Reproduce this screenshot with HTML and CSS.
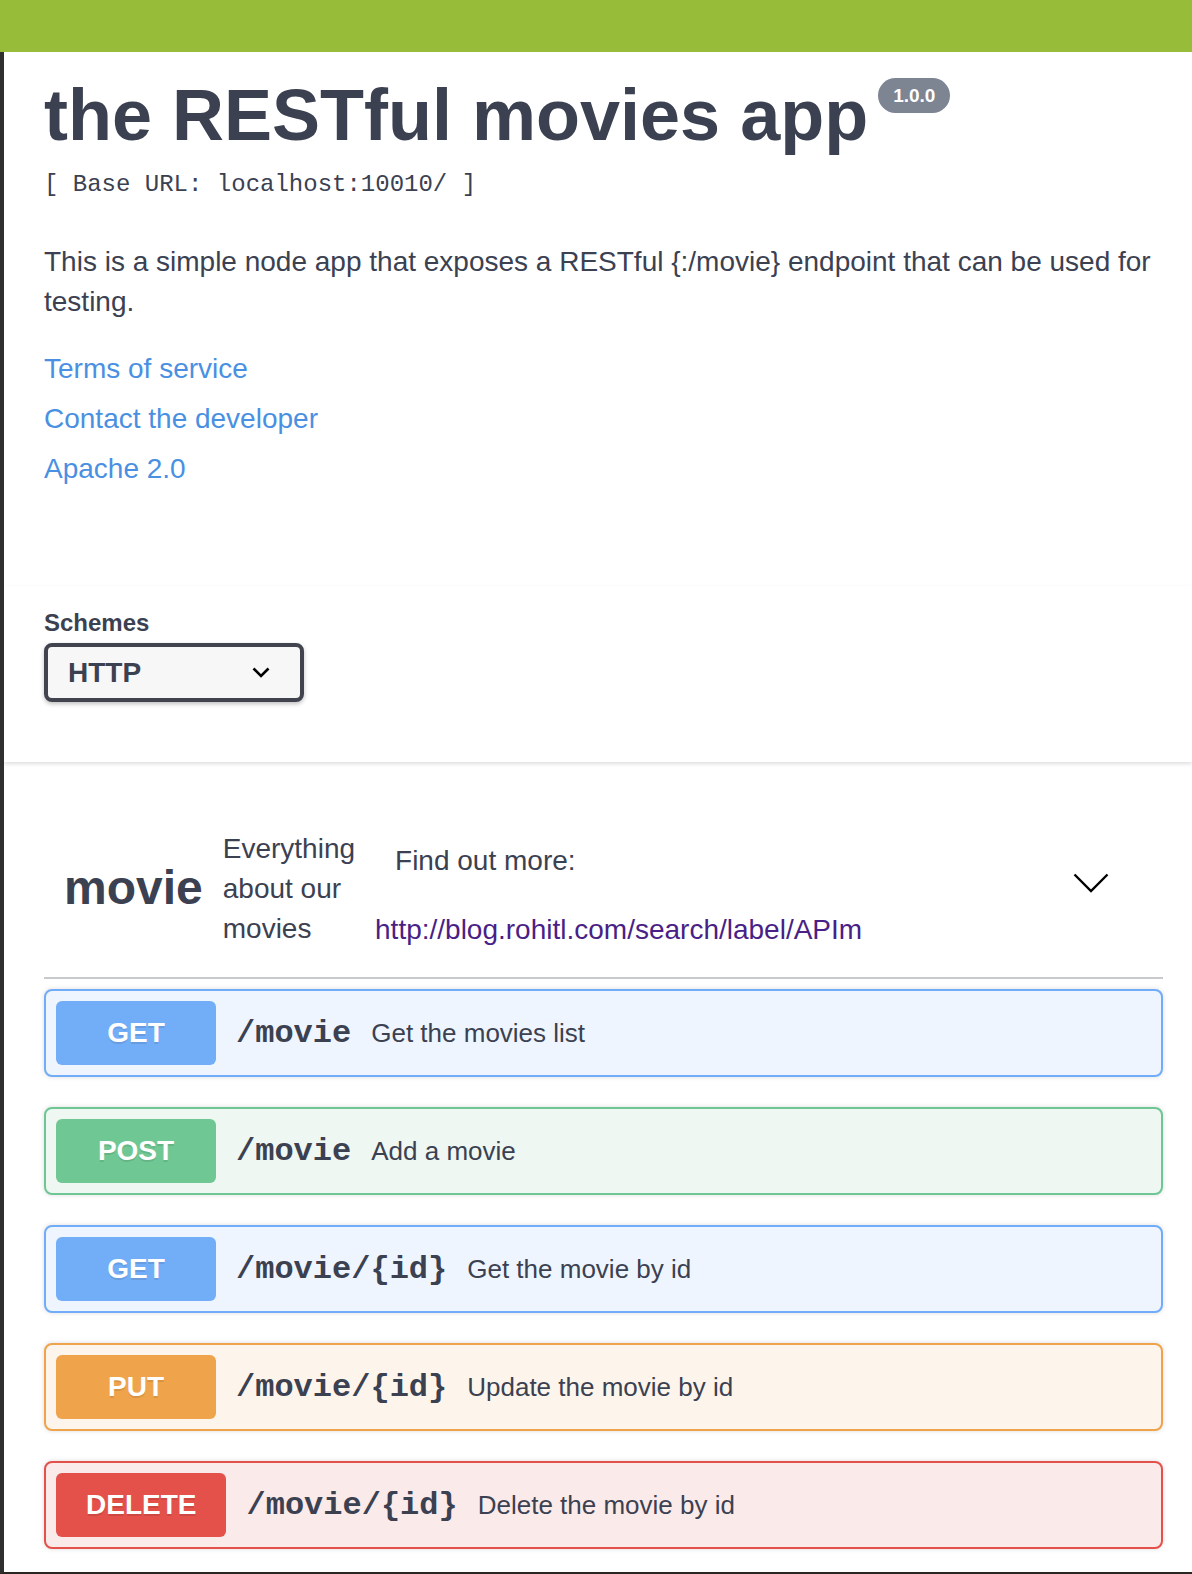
FILE: index.html
```html
<!DOCTYPE html>
<html lang="en">
<head>
<meta charset="utf-8">
<title>the RESTful movies app</title>
<link rel="stylesheet" href="styles.css">
</head>
<body>
<div class="topbar"></div>
<div class="page">
  <div class="wrapper">
    <section class="info">
      <h2 class="title">the RESTful movies app<span class="version">1.0.0</span></h2>
      <pre class="base-url">[ Base URL: localhost:10010/ ]</pre>
      <p class="desc">This is a simple node app that exposes a RESTful {:/movie} endpoint that can be used for testing.</p>
      <div class="links">
        <a class="link" href="#">Terms of service</a>
        <a class="link" href="#">Contact the developer</a>
        <a class="link" href="#">Apache 2.0</a>
      </div>
    </section>
  </div>

  <section class="schemes">
    <div class="wrapper">
      <label class="schemes-label">Schemes</label>
      <div class="select">
        <span>HTTP</span>
        <svg class="select-arrow" width="18" height="11" viewBox="0 0 18 11"><polyline points="1.5,1.5 9,9 16.5,1.5" fill="none" stroke="#000" stroke-width="2.6"/></svg>
      </div>
    </div>
  </section>

  <div class="wrapper">
    <h4 class="tag">
      <span class="tag-name">movie</span>
      <small class="tag-desc">Everything about our movies</small>
      <div class="tag-more">
        <small class="more-label">Find out more:</small><br>
        <a class="more-link" href="#">http://blog.rohitl.com/search/label/APIm</a>
      </div>
      <span class="expand">
        <svg width="36" height="20" viewBox="0 0 36 20"><polyline points="1.5,1.5 18,18 34.5,1.5" fill="none" stroke="#000" stroke-width="2.4"/></svg>
      </span>
    </h4>

    <div class="ops">
      <div class="op op-get">
        <span class="method">GET</span>
        <span class="path">/movie</span>
        <span class="summary">Get the movies list</span>
      </div>
      <div class="op op-post">
        <span class="method">POST</span>
        <span class="path">/movie</span>
        <span class="summary">Add a movie</span>
      </div>
      <div class="op op-get">
        <span class="method">GET</span>
        <span class="path">/movie/{id}</span>
        <span class="summary">Get the movie by id</span>
      </div>
      <div class="op op-put">
        <span class="method">PUT</span>
        <span class="path">/movie/{id}</span>
        <span class="summary">Update the movie by id</span>
      </div>
      <div class="op op-delete">
        <span class="method">DELETE</span>
        <span class="path">/movie/{id}</span>
        <span class="summary">Delete the movie by id</span>
      </div>
    </div>
  </div>
</div>
</body>
</html>
```

FILE: styles.css
```css
html {
  overflow: hidden;
}

body {
  margin: 0;
  background: #fff;
  font-family: "Liberation Sans", Arial, Helvetica, sans-serif;
  color: #3b4151;
}

.topbar {
  height: 52px;
  background: #96bc3a;
}

.page {
  height: calc(100vh - 52px);
  box-sizing: border-box;
  border-left: 4px solid #2f2f2f;
  border-bottom: 2px solid #2a2520;
  overflow: hidden;
}

.wrapper {
  padding: 0 29px 0 40px;
}

/* ---------- info ---------- */
.info {
  padding-top: 23px;
  margin-bottom: 97px;
}

.title {
  margin: 0;
  font-size: 72px;
  font-weight: bold;
  line-height: 80px;
  color: #3b4151;
  white-space: nowrap;
}

.version {
  display: inline-block;
  vertical-align: top;
  margin: 3px 0 0 10px;
  padding: 6px 15px;
  font-size: 19px;
  line-height: 23px;
  font-weight: bold;
  color: #fff;
  background: #7d8492;
  border-radius: 57px;
}

.base-url {
  margin: 15px 0 0;
  font-family: "Liberation Mono", "Courier New", monospace;
  font-size: 24px;
  line-height: 30px;
  color: #3b4151;
}

.desc {
  margin: 42px 0 0;
  font-size: 28px;
  line-height: 40px;
  color: #3b4151;
}

.links {
  margin-top: 27px;
  display: flex;
  flex-direction: column;
  align-items: flex-start;
  gap: 10px;
}

.link {
  font-size: 28px;
  line-height: 40px;
  color: #4a90e2;
  text-decoration: none;
}

/* ---------- schemes ---------- */
.schemes {
  padding: 23px 0 60px;
  margin-bottom: 38px;
  background: #fff;
  box-shadow: 0 2px 4px rgba(0, 0, 0, 0.13);
}

.schemes-label {
  display: block;
  font-size: 24px;
  font-weight: bold;
  line-height: 28px;
  color: #3b4151;
}

.select {
  margin-top: 6px;
  width: 260px;
  height: 59px;
  box-sizing: border-box;
  display: flex;
  align-items: center;
  justify-content: space-between;
  padding: 0 30px 0 20px;
  border: 4px solid #41444e;
  border-radius: 8px;
  background: #f7f7f7;
  box-shadow: 0 2px 4px rgba(0, 0, 0, 0.25);
  font-size: 28px;
  font-weight: bold;
  color: #3b4151;
}

.select-arrow {
  display: block;
}

/* ---------- tag ---------- */
.tag {
  margin: 0 0 10px;
  display: flex;
  align-items: center;
  padding: 20px 40px 20px 20px;
  border-bottom: 2px solid #c8c9cd;
  font-size: 48px;
  font-weight: bold;
  line-height: 1.42857;
  color: #3b4151;
}

.tag-name {
  flex: none;
}

.tag-desc {
  flex: none;
  width: min-content;
  padding: 0 20px;
  font-size: 28px;
  font-weight: normal;
  color: #3b4151;
}

.tag-more {
  flex: 1;
}

.more-label {
  padding: 0 20px;
  font-size: 28px;
  font-weight: normal;
  color: #3b4151;
}

.more-link {
  font-size: 28px;
  font-weight: normal;
  color: #4a1f86;
  text-decoration: none;
}

.expand {
  flex: none;
  display: flex;
  margin: 0 14px 11px 0;
}

/* ---------- operations ---------- */
.op {
  display: flex;
  align-items: center;
  padding: 10px;
  margin-bottom: 30px;
  border: 2px solid;
  border-radius: 8px;
  box-shadow: 0 0 5px rgba(0, 0, 0, 0.14);
}

.method {
  flex: none;
  min-width: 160px;
  box-sizing: border-box;
  padding: 12px 30px;
  border-radius: 6px;
  font-size: 28px;
  font-weight: bold;
  line-height: 40px;
  text-align: center;
  color: #fff;
  text-shadow: 0 2px 0 rgba(0, 0, 0, 0.1);
}

.path {
  flex: none;
  padding: 0 20px;
  font-family: "Liberation Mono", "Courier New", monospace;
  font-size: 32px;
  font-weight: bold;
  color: #3b4151;
}

.summary {
  font-size: 26px;
  color: #3b4151;
}

.op-get {
  border-color: #70acf7;
  background: #eef5fe;
}
.op-get .method {
  background: #72adf8;
}

.op-post {
  border-color: #6dc693;
  background: #eef7f2;
}
.op-post .method {
  background: #6fc794;
}

.op-put {
  border-color: #efa44b;
  background: #fdf5ec;
}
.op-put .method {
  background: #efa44b;
}

.op-delete {
  border-color: #e4504a;
  background: #fbeaea;
}
.op-delete .method {
  background: #e4504a;
}
```
